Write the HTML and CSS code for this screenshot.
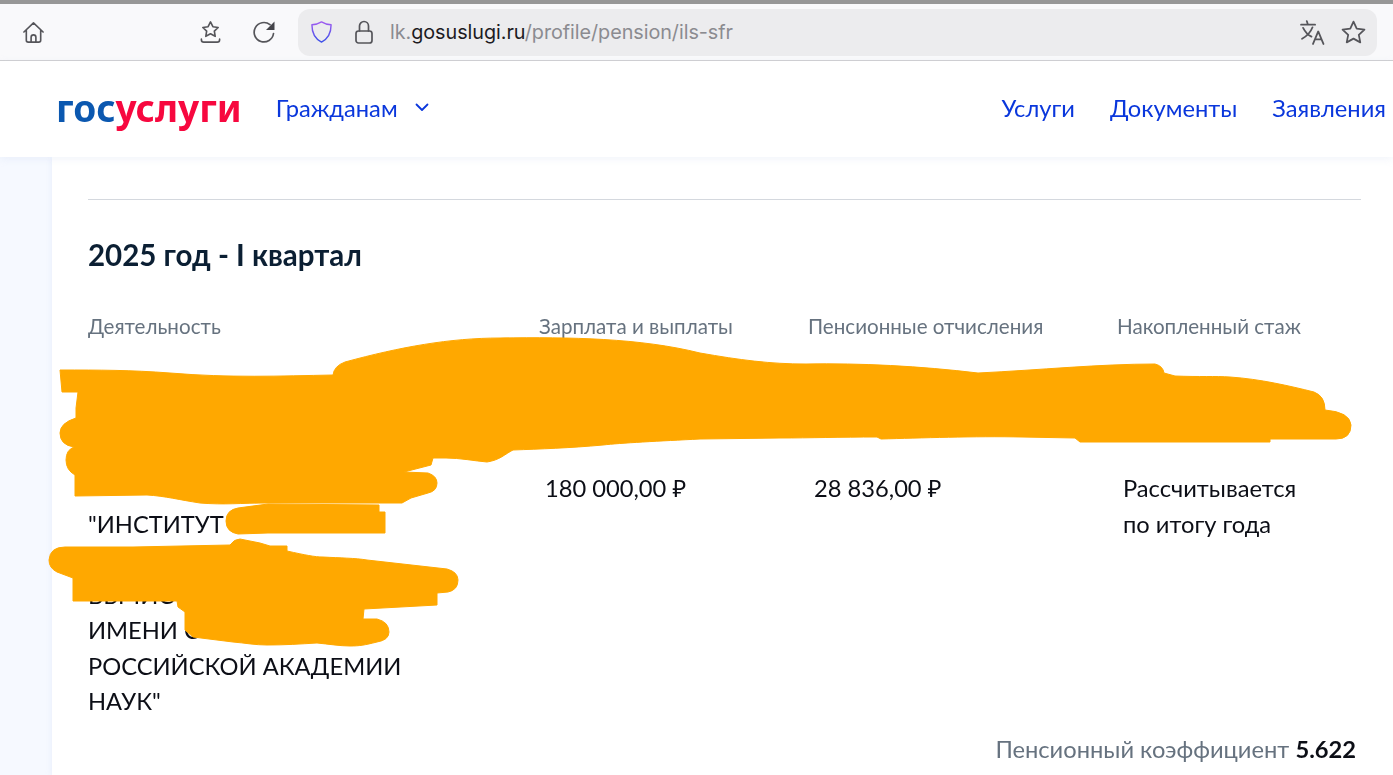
FILE: index.html
```html
<!DOCTYPE html>
<html lang="ru">
<head>
<meta charset="utf-8">
<title>Госуслуги</title>
<link rel="stylesheet" href="styles.css">
</head>
<body>
<div class="toolbar">
  <svg class="icon home" viewBox="0 0 24 24"><path d="M2 11.500 12 2l10 9.500M4.500 9.500V20a2 2 0 0 0 2 2h11a2 2 0 0 0 2-2V9.500M9.500 22v-5a2.500 2.500 0 0 1 5 0v5"/></svg>
  <svg class="icon save" viewBox="0 0 24 24"><path d="M12 1.500l2.500 5 5.500.8-4 3.800.9 5.400-4.900-2.600-4.900 2.600.9-5.400-4-3.800 5.500-.8zM2.500 19.500v.5a2.500 2.500 0 0 0 2.500 2.500h14a2.500 2.500 0 0 0 2.500-2.500v-.5"/></svg>
  <svg class="icon reload" viewBox="0 0 24 24"><path d="M21.500 13.500a9.700 9.700 0 1 1-3.500-8.800"/><path class="solid" d="M22.500 1.500V10H14z"/></svg>
  <div class="urlbar">
    <svg class="icon shield" viewBox="0 0 24 24"><defs><linearGradient id="sg" x1="0" y1="0" x2="0" y2="1"><stop offset="0" stop-color="#a05cf0"/><stop offset="1" stop-color="#3b50e8"/></linearGradient></defs><path d="M12 1.500c3.300 2 6 2.800 10 3 0 8.500-2.800 14.500-10 18C4.800 19 2 13 2 4.500c4-.2 6.700-1 10-3z" stroke="url(#sg)"/></svg>
    <svg class="icon lock" viewBox="0 0 18 24"><rect x="1" y="11" width="16" height="12" rx="2.500"/><path d="M4.500 11V6a4.500 4.500 0 0 1 9 0v5"/></svg>
    <div class="url">lk.<span class="domain">gosuslugi.ru</span>/profile/pension/ils-sfr</div>
    <svg class="icon translate" viewBox="0 0 24 24"><path d="M1 4.500h13.500M6.500 1l1 3M3 7.500c2 4 5 7 8 8.500M12 7c-1.500 4-4.500 8-10 11M12.500 23l5-12 5 12M14.500 18.500h6"/></svg>
    <svg class="icon star" viewBox="0 0 24 24"><path d="M12 1.500l3.100 6.800 7.400 1-5.400 5 1.400 7.200-6.500-3.600-6.500 3.600 1.400-7.200-5.400-5 7.400-1z"/></svg>
  </div>
</div>

<header class="site-header">
  <div class="logo"><span class="logo-gos">гос</span><span class="logo-uslugi">услуги</span></div>
  <a class="nav-link citizens">Гражданам<svg class="chevron" viewBox="0 0 14 9"><path d="M1.500 1.500 7 7l5.500-5.500"/></svg></a>
  <nav class="nav">
    <a class="nav-link">Услуги</a>
    <a class="nav-link">Документы</a>
    <a class="nav-link">Заявления</a>
  </nav>
</header>

<div class="page">
  <main class="card">
    <hr class="rule">
    <h2 class="title">2025 год - I квартал</h2>
    <div class="grid">
      <div class="th">Деятельность</div>
      <div class="th">Зарплата и выплаты</div>
      <div class="th">Пенсионные отчисления</div>
      <div class="th">Накопленный стаж</div>
      <div class="td org">
        <div>&nbsp;</div>
        <div>"ИНСТИТУТ</div>
        <div>&nbsp;</div>
        <div>ВЫЧИС</div>
        <div>ИМЕНИ С</div>
        <div>РОССИЙСКОЙ АКАДЕМИИ</div>
        <div>НАУК"</div>
      </div>
      <div class="td val">180 000,00 ₽</div>
      <div class="td val">28 836,00 ₽</div>
      <div class="td val">Рассчитывается<br>по итогу года</div>
    </div>
    <div class="coef"><span class="coef-label">Пенсионный коэффициент</span> <b class="coef-num">5.622</b></div>
  </main>
</div>

<svg class="scribble" viewBox="0 0 1393 775">
  <path d="M60 370C100 370 130 370 170 373C230 378 280 376 333 375Q334 366 345 362C400 347 450 338 500 338C570 337 640 338 700 353C740 360 770 364 806 364C860 363 920 366 978 373C1040 370 1100 364 1155 364Q1163 366 1164 373L1175 376C1200 377 1215 376 1230 377C1260 379 1290 386 1314 392Q1325 396 1325 410Q1350 412 1351 425Q1351 439 1336 439L1270 439 1270 442 1080 442 1075 438 1022 437C975 436 920 438 881 439L877 437C840 437 810 438 780 438L700 439C660 441 620 443 603 445C570 448 540 449 513 450C505 454 500 460 487 462C475 461 460 458 446 458L433 458 431 465 404 472 428 473Q437 476 437 483Q437 491 428 493L411 498 402 503 268 503C240 503 225 505 200 503C180 500 165 496 147 495L75 496 75 475Q66 470 66 460Q66 450 74 447Q60 445 60 433Q60 423 76 418L76 408 78 392 62 392Z"/>
  <path d="M226 521Q226 510 238 508L268 504 379 505 379 512 385 512 385 533 268 533 238 534Q226 532 226 521Z"/>
  <path d="M49 560Q50 547 65 547L133 547 230 545Q234 539 240 539L260 543 270 546 287 546 287 551C305 555 315 557 323 557C340 558 355 558 367 560L447 569Q458 572 458 580 458 590 448 592L437 593 437 605 364 609 363 619 377 619Q389 622 389 632 389 640 377 642C365 645 360 646 350 646C340 646 328 644 317 643C300 644 285 645 267 645C255 645 245 643 233 642L193 637 185 630 185 612 178 607 177 601 73 601 73 578 57 572Q49 568 49 560Z"/>
</svg>
</body>
</html>
```
FILE: styles.css
```css
* { box-sizing: border-box; }
html, body { margin: 0; height: 775px; overflow: hidden; }
body { position: relative; font-family: Lato, "Open Sans", "Noto Sans", sans-serif; color: #0b1f33; background: #f6f9ff; filter: blur(.35px); }

.toolbar { height: 61px; border-top: 4px solid #979797; border-bottom: 1px solid #cfcfd1; background: #f9f9fb; display: flex; align-items: center; padding: 0 16px 0 22px; }
.icon { fill: none; stroke: #55555a; stroke-width: 1.7; stroke-linecap: round; stroke-linejoin: round; flex: none; }
.icon .solid { fill: #44444a; stroke: none; }
.home { width: 23px; height: 23px; }
.save { width: 23px; height: 24px; margin-left: 154px; }
.reload { width: 24px; height: 24px; margin-left: 30px; }
.urlbar { flex: 1; height: 47px; margin-left: 22px; background: #ececee; border-radius: 12px; display: flex; align-items: center; padding: 0 11px 0 12px; }
.shield { width: 23px; height: 24px; stroke-width: 1.5; }
.lock { width: 18px; height: 24px; margin-left: 22px; }
.url { margin-left: 17px; flex: 1; font: 400 19.8px Inter, Roboto, sans-serif; letter-spacing: -0.05px; color: #8b8b90; }
.domain { color: #1c1b22; }
.translate { width: 25px; height: 25px; }
.star { width: 25px; height: 25px; margin-left: 16px; }

.site-header { height: 96px; background: #fff; display: flex; align-items: center; padding: 0 7px 0 56px; position: relative; box-shadow: 0 2px 8px rgba(180, 195, 225, .18); }
.logo { font: 700 37px "Noto Sans", sans-serif; line-height: 1; margin-top: -3px; }
.logo-gos { color: #0b58b0; }
.logo-uslugi { color: #f7083f; }
.nav-link { color: #0a37dc; font-size: 23.7px; line-height: 30px; text-decoration: none; white-space: nowrap; margin-top: -3px; }
.citizens { margin-left: 34px; display: flex; align-items: center; }
.chevron { width: 14px; height: 9px; margin-left: 17px; fill: none; stroke: #0a37dc; stroke-width: 1.8; stroke-linecap: round; stroke-linejoin: round; }
.nav { margin-left: auto; display: flex; gap: 35px; }

.page { margin-left: 52px; height: 618px; background: #fff; padding: 42px 32px 0 36px; box-shadow: 0 0 6px rgba(190, 205, 240, .3); }
.card { display: block; }
.rule { margin: 0; border: 0; border-top: 1px solid #d4d8de; }
.title { margin: 36px 0 0; font-size: 29.5px; line-height: 38px; font-weight: 700; }
.grid { display: grid; grid-template-columns: 451px 269px 309px 1fr; margin-top: 40px; }
.th { font-size: 20.6px; line-height: 24px; color: #66727f; }
.td { font-size: 23.7px; line-height: 35.5px; color: #0c0e16; padding-top: 133px; }
.val { padding-left: 6px; }
.coef { text-align: right; padding-right: 5px; margin-top: 15.5px; font-size: 23.7px; line-height: 28px; }
.coef-label { color: #66727f; }
.coef-num { font-weight: 700; color: #0c0e16; }

.scribble { position: absolute; left: 0; top: 0; width: 1393px; height: 775px; pointer-events: none; }
.scribble path { fill: #ffa800; stroke: #ffa800; stroke-width: 1; stroke-linejoin: round; }
```
